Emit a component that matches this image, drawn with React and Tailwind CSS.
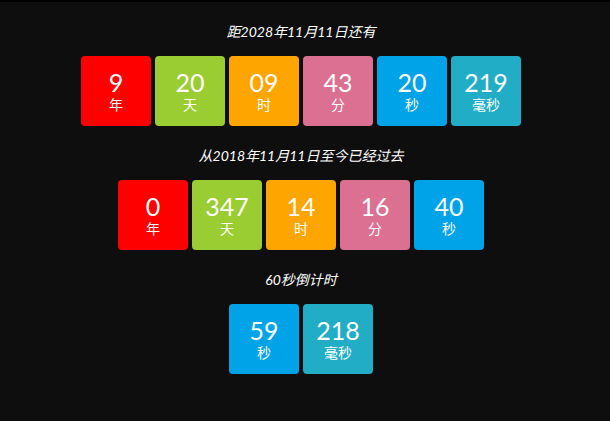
const sections = [
  {
    title: '距2028年11月11日还有',
    items: [
      { v: '9', l: '年', c: 'bg-[#ff0000]' },
      { v: '20', l: '天', c: 'bg-[#9acd32]' },
      { v: '09', l: '时', c: 'bg-[#ffa500]' },
      { v: '43', l: '分', c: 'bg-[#db7093]' },
      { v: '20', l: '秒', c: 'bg-[#00a2e8]' },
      { v: '219', l: '毫秒', c: 'bg-[#21adc6]' },
    ],
  },
  {
    title: '从2018年11月11日至今已经过去',
    items: [
      { v: '0', l: '年', c: 'bg-[#ff0000]' },
      { v: '347', l: '天', c: 'bg-[#9acd32]' },
      { v: '14', l: '时', c: 'bg-[#ffa500]' },
      { v: '16', l: '分', c: 'bg-[#db7093]' },
      { v: '40', l: '秒', c: 'bg-[#00a2e8]' },
    ],
  },
  {
    title: '60秒倒计时',
    items: [
      { v: '59', l: '秒', c: 'bg-[#00a2e8]' },
      { v: '218', l: '毫秒', c: 'bg-[#21adc6]' },
    ],
  },
];

function Box({ v, l, c }) {
  return (
    <div className={`w-[70px] h-[70px] rounded-[4px] flex flex-col items-center justify-center text-white ${c}`}>
      <div className="text-[25px] leading-[26px]">{v}</div>
      <div className="text-[14px] leading-[18px] mt-[1px]">{l}</div>
    </div>
  );
}

export default function App() {
  return (
    <div className="min-h-screen bg-[#0e0e0e] border-t-2 border-black pt-[20px] font-['Lato','Noto_Sans_CJK_SC',sans-serif]">
      <div className="w-[602px] flex flex-col items-center">
        {sections.map((s, i) => (
          <div key={i} className={`flex flex-col items-center ${i > 0 ? 'mt-[20px]' : ''}`}>
            <div className="h-5 leading-5 text-[14px] italic text-white mb-[14px]">{s.title}</div>
            <div className="flex gap-1">
              {s.items.map((it, j) => (
                <Box key={j} {...it} />
              ))}
            </div>
          </div>
        ))}
      </div>
    </div>
  );
}
